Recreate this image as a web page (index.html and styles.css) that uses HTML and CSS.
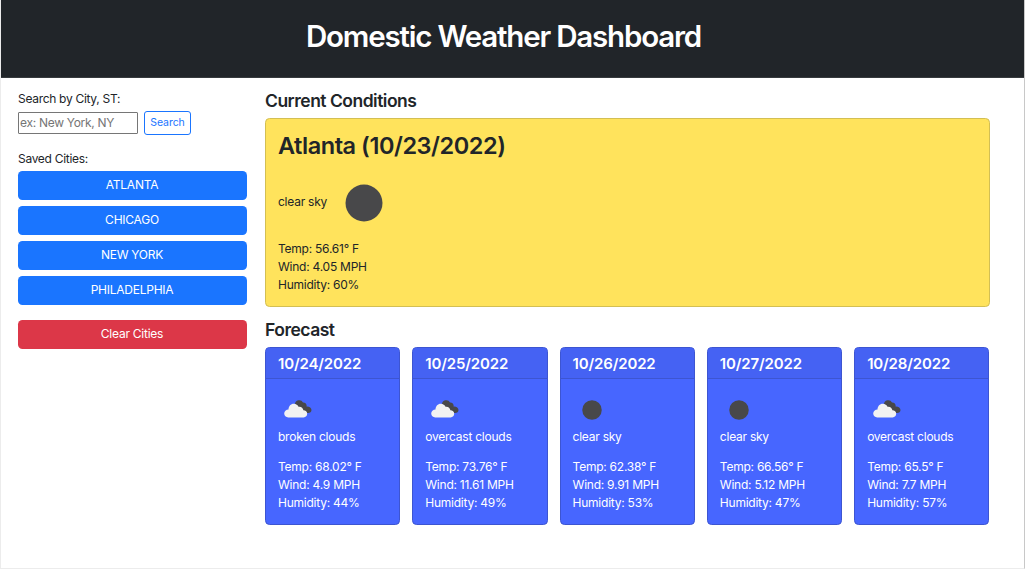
FILE: index.html
```html
<!DOCTYPE html>
<html lang="en">
<head>
<meta charset="utf-8">
<title>Domestic Weather Dashboard</title>
<link rel="stylesheet" href="styles.css">
</head>
<body>
<svg class="defs" aria-hidden="true">
  <symbol id="clouds" viewBox="0 0 28 18">
    <path fill="#48484a" d="M11 4.500a4.200 4.200 0 0 1 8-1.900c1.900-.2 3.200 1 3.600 2.600 0 .5 0 1-.1 1.300 2.700-.3 5 1.300 5 3.500 0 1.900-1.400 3-3.400 3h-7z"/>
    <path fill="#f2f2f2" d="M4.300 17.400C1.900 17.400.2 15.700.2 13.500c0-2.300 1.900-4 4.300-4 .1-3.400 2.300-5.800 5.300-5.800 2.300 0 4 1.300 4.700 3.100 2.600-.4 4.600 1.200 4.900 3.500 2.200.1 3.800 1.500 3.800 3.500 0 2.100-1.500 3.600-3.600 3.600z"/>
  </symbol>
  <symbol id="clear" viewBox="0 0 38 38"><circle cx="19" cy="19" r="18.500" fill="#48484a"/></symbol>
</svg>
<header class="banner"><h1>Domestic Weather Dashboard</h1></header>
<div class="layout">
  <aside class="sidebar">
    <label class="label" for="city">Search by City, ST:</label>
    <form class="search">
      <input id="city" type="text" placeholder="ex: New York, NY">
      <button type="button" class="search-btn">Search</button>
    </form>
    <p class="label saved">Saved Cities:</p>
    <div class="cities">
      <button class="btn">ATLANTA</button>
      <button class="btn">CHICAGO</button>
      <button class="btn">NEW YORK</button>
      <button class="btn">PHILADELPHIA</button>
      <button class="btn clear">Clear Cities</button>
    </div>
  </aside>
  <main class="main">
    <h2>Current Conditions</h2>
    <section class="current">
      <h3>Atlanta (10/23/2022)</h3>
      <div class="sky"><span>clear sky</span><svg class="moon"><use href="#clear"/></svg></div>
      <p>Temp: 56.61° F</p><p>Wind: 4.05 MPH</p><p>Humidity: 60%</p>
    </section>
    <h2 class="forecast-title">Forecast</h2>
    <section class="forecast">
      <article class="day"><h4>10/24/2022</h4><div class="body"><svg class="icon cloud"><use href="#clouds"/></svg><p class="desc">broken clouds</p><p>Temp: 68.02° F</p><p>Wind: 4.9 MPH</p><p>Humidity: 44%</p></div></article>
      <article class="day"><h4>10/25/2022</h4><div class="body"><svg class="icon cloud"><use href="#clouds"/></svg><p class="desc">overcast clouds</p><p>Temp: 73.76° F</p><p>Wind: 11.61 MPH</p><p>Humidity: 49%</p></div></article>
      <article class="day"><h4>10/26/2022</h4><div class="body"><svg class="icon disc"><use href="#clear"/></svg><p class="desc">clear sky</p><p>Temp: 62.38° F</p><p>Wind: 9.91 MPH</p><p>Humidity: 53%</p></div></article>
      <article class="day"><h4>10/27/2022</h4><div class="body"><svg class="icon disc"><use href="#clear"/></svg><p class="desc">clear sky</p><p>Temp: 66.56° F</p><p>Wind: 5.12 MPH</p><p>Humidity: 47%</p></div></article>
      <article class="day"><h4>10/28/2022</h4><div class="body"><svg class="icon cloud"><use href="#clouds"/></svg><p class="desc">overcast clouds</p><p>Temp: 65.5° F</p><p>Wind: 7.7 MPH</p><p>Humidity: 57%</p></div></article>
    </section>
  </main>
</div>
</body>
</html>
```
FILE: styles.css
```css
* { box-sizing: border-box; }
body {
  margin: 0;
  height: 569px;
  overflow: hidden;
  border: 1px solid #ececec;
  border-top: 0;
  border-right-color: #c8c8c8;
  background: #fff;
  color: #212529;
  font: 12px/18px Inter, "Liberation Sans", sans-serif;
  letter-spacing: -0.24px;
}
h1, h2, h3, h4, p { margin: 0; font-weight: 600; }
p { font-weight: 400; }
button, input { font-family: inherit; letter-spacing: inherit; }
.defs { display: none; }
.banner {
  height: 78px;
  margin: 0 -1px;
  padding: 18px 18px 0 0;
  background: #212529;
  border-bottom: 1px solid #373b3e;
  color: #fff;
  text-align: center;
}
h1 { font-size: 29.5px; line-height: 36px; letter-spacing: -1.2px; }
.layout { display: flex; gap: 18px; padding: 12px 34px 0 17px; }
.sidebar { width: 229px; flex: none; }
.label { display: block; line-height: 18px; letter-spacing: -0.3px; }
.search { display: flex; align-items: center; gap: 6px; height: 24px; margin-top: 3px; }
.search input {
  width: 120px;
  height: 22px;
  padding: 0 1px 2px;
  border: 1px solid #767676;
  border-radius: 1px;
  font-size: 12px;
  letter-spacing: -0.3px;
  background: #fff;
}
.search input::placeholder { color: #757575; }
.search-btn {
  width: 47px;
  height: 24px;
  padding: 0 0 1px;
  border: 1px solid #1a75ff;
  border-radius: 3px;
  background: #fff;
  color: #1a75ff;
  font-size: 10.5px;
  letter-spacing: -0.05px;
}
.saved { margin-top: 15px; }
.cities { display: flex; flex-direction: column; gap: 6px; margin-top: 3px; }
.btn {
  height: 29px;
  padding: 0 1px 2px 0;
  border: 0;
  border-radius: 4.500px;
  background: #1a75ff;
  color: #fff;
  font-size: 12px;
}
.clear { margin-top: 9px; background: #dc3748; }
.main { flex: 1; min-width: 0; }
h2 { font-size: 17.500px; line-height: 22px; letter-spacing: -0.5px; }
.current {
  height: 189px;
  margin-top: 6px;
  padding: 12px;
  border: 1px solid #d3bf53;
  border-radius: 4.500px;
  background: #ffe35c;
}
h3 { font-size: 23.5px; line-height: 29px; letter-spacing: -0.45px; }
.sky { display: flex; align-items: center; gap: 18px; height: 75px; margin: 5px 0 0; }
.sky span { padding-bottom: 2px; }
.moon { width: 38px; height: 38px; }
.forecast-title { margin-top: 12px; }
.forecast { display: grid; grid-template-columns: repeat(5, 1fr); gap: 12px; margin: 6px 0.6px 0 0; }
.day {
  height: 178px;
  border: 1px solid #3d55d1;
  border-radius: 4.500px;
  background: #4766ff;
  color: #fff;
  overflow: hidden;
}
h4 {
  height: 31px;
  padding: 0 12px;
  border-bottom: 1px solid #3d55d1;
  background: #4562f3;
  font-size: 15px;
  line-height: 32px;
  letter-spacing: -0.15px;
}
.body { padding: 12px; }
.icon { display: block; }
.cloud { width: 28px; height: 18px; margin: 9px 0 10px 5.500px; }
.disc { width: 20px; height: 20px; margin: 9px 0 8px 9px; }
.desc { margin-bottom: 12px; }
```
